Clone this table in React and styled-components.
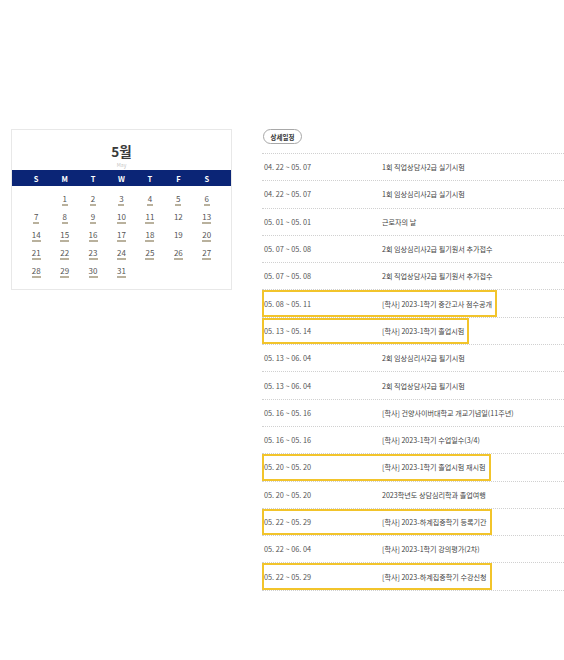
import React from "react";
import styled, { createGlobalStyle } from "styled-components";

const GlobalStyle = createGlobalStyle`
  body {
    margin: 0;
    background: #fff;
    font-family: "Noto Sans CJK KR", "Noto Sans", sans-serif;
  }
`;

const WEEK = ["S", "M", "T", "W", "T", "F", "S"];
const NO_MARK = [12, 19];

const SCHEDULE = [
  { date: "04. 22 ~ 05. 07", title: "1회 직업상담사2급 실기시험" },
  { date: "04. 22 ~ 05. 07", title: "1회 임상심리사2급 실기시험" },
  { date: "05. 01 ~ 05. 01", title: "근로자의 날" },
  { date: "05. 07 ~ 05. 08", title: "2회 임상심리사2급 필기원서 추가접수" },
  { date: "05. 07 ~ 05. 08", title: "2회 직업상담사2급 필기원서 추가접수" },
  { date: "05. 08 ~ 05. 11", title: "[학사] 2023-1학기 중간고사 점수공개", hl: true },
  { date: "05. 13 ~ 05. 14", title: "[학사] 2023-1학기 졸업시험", hl: true },
  { date: "05. 13 ~ 06. 04", title: "2회 임상심리사2급 필기시험" },
  { date: "05. 13 ~ 06. 04", title: "2회 직업상담사2급 필기시험" },
  { date: "05. 16 ~ 05. 16", title: "[학사] 건양사이버대학교 개교기념일(11주년)" },
  { date: "05. 16 ~ 05. 16", title: "[학사] 2023-1학기 수업일수(3/4)" },
  { date: "05. 20 ~ 05. 20", title: "[학사] 2023-1학기 졸업시험 재시험", hl: true },
  { date: "05. 20 ~ 05. 20", title: "2023학년도 상담심리학과 졸업여행" },
  { date: "05. 22 ~ 05. 29", title: "[학사] 2023-하계집중학기 등록기간", hl: true },
  { date: "05. 22 ~ 06. 04", title: "[학사] 2023-1학기 강의평가(2차)" },
  { date: "05. 22 ~ 05. 29", title: "[학사] 2023-하계집중학기 수강신청", hl: true },
];

const App = () => {
  const cells = [null, ...Array.from({ length: 31 }, (_, i) => i + 1)];

  return (
    <>
      <GlobalStyle />
      <Page>
        <Card>
          <MonthHead>
            <MonthTitle>5월</MonthTitle>
            <MonthSub>May</MonthSub>
          </MonthHead>
          <WeekBar>
            {WEEK.map((d, i) => (
              <WeekDay key={i}>{d}</WeekDay>
            ))}
          </WeekBar>
          <DayGrid>
            {cells.map((n, i) => (
              <DayCell key={i}>
                {n && <DayNum $marked={!NO_MARK.includes(n)}>{n}</DayNum>}
              </DayCell>
            ))}
          </DayGrid>
        </Card>

        <Side>
          <Badge>상세일정</Badge>
          <List>
            {SCHEDULE.map((s, i) => (
              <Row key={i}>
                <Item $hl={s.hl}>
                  <DateText>{s.date}</DateText>
                  <Title>{s.title}</Title>
                </Item>
              </Row>
            ))}
          </List>
        </Side>
      </Page>
    </>
  );
};

const Page = styled.div`
  display: flex;
  align-items: flex-start;
  gap: 30px;
  padding: 129px 0 0 11px;
`;

const Card = styled.div`
  width: 221px;
  box-sizing: border-box;
  border: 1px solid #e8e8e8;
  padding-bottom: 8px;
`;

const MonthHead = styled.div`
  display: flex;
  flex-direction: column;
  align-items: center;
  padding-top: 12px;
  height: 28px;
`;

const MonthTitle = styled.div`
  font-size: 13.5px;
  font-weight: 700;
  color: #3a3a3a;
  line-height: 18px;
`;

const MonthSub = styled.div`
  font-size: 5px;
  color: #c4c4c4;
  line-height: 7px;
  margin-top: 1px;
`;

const WeekBar = styled.div`
  display: grid;
  grid-template-columns: repeat(7, 1fr);
  padding: 0 10px;
  height: 16px;
  align-items: center;
  background: #0b2576;
`;

const WeekDay = styled.span`
  text-align: center;
  color: #fff;
  font-size: 7.5px;
  font-weight: 700;
`;

const DayGrid = styled.div`
  display: grid;
  grid-template-columns: repeat(7, 1fr);
  grid-auto-rows: 17.9px;
  padding: 5.5px 10px 0;
`;

const DayCell = styled.div`
  display: flex;
  align-items: center;
  justify-content: center;
`;

const DayNum = styled.span`
  display: inline-block;
  min-width: 6px;
  text-align: center;
  font-size: 8px;
  line-height: 9px;
  color: #555;
  padding-bottom: 1px;
  border-bottom: 2px solid ${({ $marked }) => ($marked ? "#b9b19d" : "transparent")};
`;

const Side = styled.div`
  flex: 1;
  display: flex;
  flex-direction: column;
  align-items: flex-start;
`;

const Badge = styled.span`
  box-sizing: border-box;
  height: 15px;
  padding: 0 6.5px;
  display: inline-flex;
  align-items: center;
  border: 1px solid #a8a8a8;
  border-radius: 8px;
  font-size: 6.5px;
  font-weight: 700;
  color: #333;
  margin-left: 1px;
`;

const List = styled.ul`
  list-style: none;
  margin: 9px 0 0;
  padding: 0;
  width: 100%;
  border-top: 1px dotted #d0d0d0;
`;

const Row = styled.li`
  box-sizing: border-box;
  height: 27.3px;
  border-bottom: 1px dotted #d0d0d0;
  display: flex;
`;

const Item = styled.div`
  box-sizing: border-box;
  display: inline-flex;
  align-items: center;
  height: 100%;
  padding-right: 3px;
  border: 2px solid ${({ $hl }) => ($hl ? "#f2c42b" : "transparent")};
`;

const DateText = styled.span`
  width: 118px;
  font-size: 7.3px;
  color: #555;
`;

const Title = styled.span`
  font-size: 7.1px;
  color: #444;
  white-space: nowrap;
`;

export default App;
